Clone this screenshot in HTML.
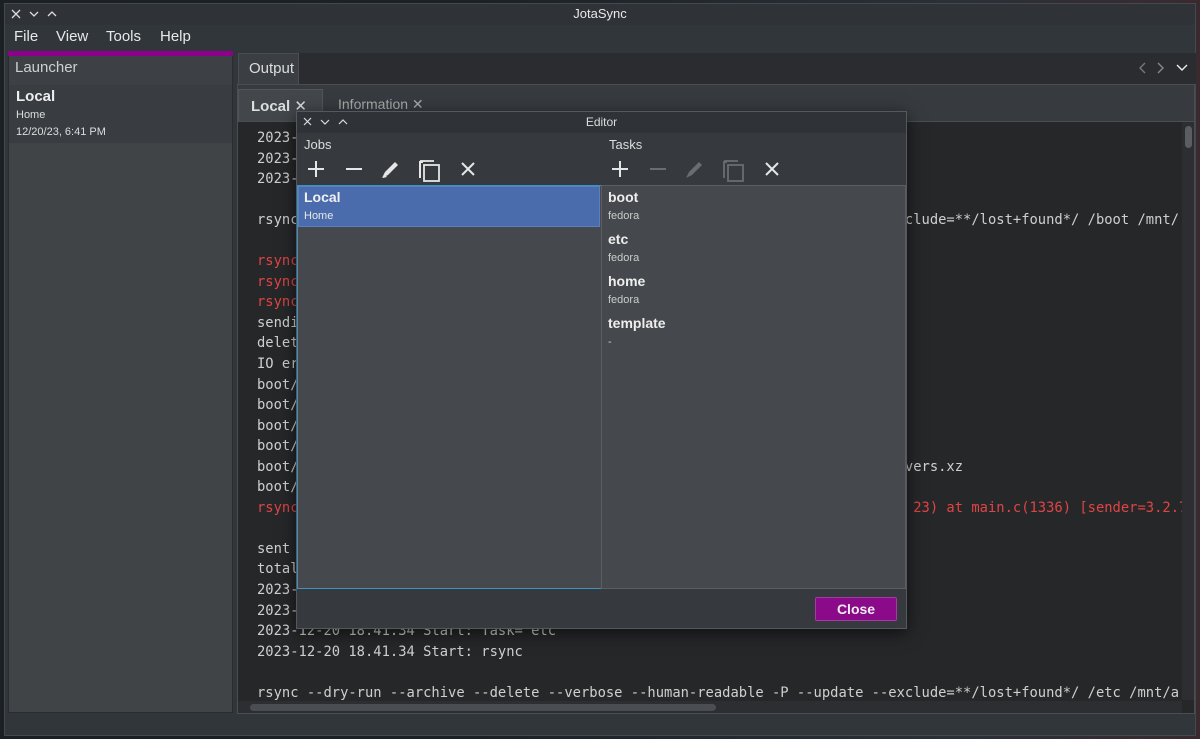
<!DOCTYPE html>
<html><head><meta charset="utf-8"><style>
*{margin:0;padding:0;box-sizing:border-box}
body{width:1200px;height:739px;background:#15191c;font-family:"Liberation Sans","DejaVu Sans",sans-serif;position:relative;overflow:hidden;color:#e0e0e0}
.a{position:absolute}
.mono{font-family:"DejaVu Sans Mono","Liberation Mono",monospace;font-size:13.8px;color:#cfcfcf;white-space:pre;line-height:20.55px}
.r{color:#e04444}
</style></head><body>
<div class="a" style="left:0;top:0;width:1200px;height:739px;background:linear-gradient(90deg,#1a2024,#1b2226 40%,#2a3038 80%,#3a2a30)"></div>
<div class="a" style="left:4px;top:3px;width:1192px;height:733px;background:#31363b;border:1px solid #45494d"></div>
<div class="a" style="left:5px;top:4px;width:1190px;height:21px;background:#2f3236"></div>
<div class="a" style="left:0;top:6px;width:1200px;text-align:center;font-size:13px;color:#e8e8e8">JotaSync</div>
<svg class="a" style="left:10px;top:8px" width="50" height="12" stroke="#ddd" stroke-width="1.3" fill="none"><path d="M2 2l8 8M10 2l-8 8"/><path d="M20 4l4 4 4-4"/><path d="M38 8l4-4 4 4"/></svg>
<div class="a" style="left:5px;top:25px;width:1190px;height:25px;background:#31363b"></div>
<div class="a" style="left:14px;top:28px;font-size:15px;color:#e8e8e8">File</div>
<div class="a" style="left:56px;top:28px;font-size:15px;color:#e8e8e8">View</div>
<div class="a" style="left:106px;top:28px;font-size:15px;color:#e8e8e8">Tools</div>
<div class="a" style="left:160px;top:28px;font-size:15px;color:#e8e8e8">Help</div>
<div class="a" style="left:8px;top:51px;width:225px;height:662px;background:#414447;border:1px solid #2a2d30"></div>
<div class="a" style="left:8px;top:51px;width:225px;height:5px;background:#8c008c"></div>
<div class="a" style="left:9px;top:56px;width:223px;height:29px;background:#3d4044"></div>
<div class="a" style="left:15px;top:59px;font-size:15px;color:#cfd0d0">Launcher</div>
<div class="a" style="left:9px;top:85px;width:223px;height:58px;background:#393c40"></div>
<div class="a" style="left:16px;top:88px;font-size:15px;font-weight:bold;color:#eee">Local</div>
<div class="a" style="left:16px;top:109px;font-size:11px;color:#ddd">Home</div>
<div class="a" style="left:16px;top:126px;font-size:11px;color:#ddd">12/20/23, 6:41 PM</div>
<div class="a" style="left:238px;top:53px;width:958px;height:31px;background:#2a2c2f"></div>
<div class="a" style="left:238px;top:53px;width:61px;height:31px;background:#3b3f43;border:1px solid #4a4e52;border-bottom:none"></div>
<div class="a" style="left:249px;top:60px;font-size:15px;color:#ddd">Output</div>
<svg class="a" style="left:1136px;top:61px" width="56" height="14" stroke-width="1.4" fill="none"><path d="M9 2l-5 5 5 5" stroke="#777"/><path d="M22 2l5 5-5 5" stroke="#888"/><path d="M41 4l5 5 5-5" stroke="#eee"/></svg>
<div class="a" style="left:237px;top:84px;width:958px;height:630px;background:#373b3f;border:1px solid #4a4e52"></div>
<div class="a" style="left:238px;top:89px;width:85px;height:33px;background:#43474b;border:1px solid #52565a"></div>
<div class="a" style="left:251px;top:97px;font-size:15px;font-weight:bold;color:#ddd">Local <span style="font-weight:normal">✕</span></div>
<div class="a" style="left:338px;top:96px;font-size:14px;color:#aaa">Information ✕</div>
<div class="a" style="left:238px;top:121px;width:956px;height:592px;background:#262729;border-top:1px solid #4a4e52;overflow:hidden">
<div class="mono a" style="left:19px;top:6px">2023-12-20 18.41.33 Start: Job= Local
2023-12-20 18.41.33 Start: Task= boot
2023-12-20 18.41.33 Start: rsync

rsync --dry-run --archive --delete --verbose --human-readable -P --update --exclude=**/lost+found*/ /boot /mnt/

<span class="r">rsync: [sender] opendir "/boot/efi" failed: Permission denied (13)</span>
<span class="r">rsync: [sender] opendir "/boot/grub2" failed: Permission denied (13)</span>
<span class="r">rsync: [sender] opendir "/boot/loader" failed: Permission denied (13)</span>
sending incremental file list
deleting boot/old
IO error encountered -- skipping file deletion
boot/
boot/config
boot/initramfs.img
boot/vmlinuz
boot/symvers.xz                                                            symvers.xz
boot/System.map
<span class="r">rsync error: some files/attrs were not transferred (see previous errors) (code 23) at main.c(1336) [sender=3.2.7]</span>

sent 1.23K bytes  received 123 bytes
total size is 123.45M  speedup is 99.99 (DRY RUN)
2023-12-20 18.41.34 End: rsync
2023-12-20 18.41.34 End: Task= boot
2023-12-20 18.41.34 Start: Task= etc
2023-12-20 18.41.34 Start: rsync

rsync --dry-run --archive --delete --verbose --human-readable -P --update --exclude=**/lost+found*/ /etc /mnt/a</div>
<div class="a" style="left:0;top:579px;width:944px;height:13px;background:#2c2e31"></div>
<div class="a" style="left:12px;top:582px;width:466px;height:7px;border-radius:4px;background:#4a4d51"></div>
</div>
<div class="a" style="left:1182px;top:122px;width:12px;height:578px;background:#2c2e31"></div>
<div class="a" style="left:1185px;top:126px;width:7px;height:22px;border-radius:4px;background:#5a5d61"></div>
<div class="a" style="left:296px;top:111px;width:611px;height:518px;background:#36393d;border:1px solid #55595d;box-shadow:0 4px 16px rgba(0,0,0,.6)"></div>
<div class="a" style="left:297px;top:112px;width:609px;height:21px;background:#2f3236"></div>
<div class="a" style="left:297px;top:115px;width:609px;text-align:center;font-size:12px;color:#ddd">Editor</div>
<svg class="a" style="left:302px;top:116px" width="50" height="12" stroke="#ddd" stroke-width="1.2" fill="none"><path d="M2 2l7 7M9 2l-7 7"/><path d="M19 4l4 4 4-4"/><path d="M37 8l4-4 4 4"/></svg>
<div class="a" style="left:304px;top:137px;font-size:13px;color:#ddd">Jobs</div>
<div class="a" style="left:609px;top:137px;font-size:13px;color:#ddd">Tasks</div>
<svg class="a" style="left:305px;top:158px" width="180" height="24" fill="none" stroke="#e6e6e6" stroke-width="2"><path d="M11 3v16M3 11h16"/><path d="M41 11h16"/><path d="M77 20l3-6 10-10 3 3-10 10z" fill="#e6e6e6" stroke="none"/><path d="M78 20l4-1-3-3z" fill="#e6e6e6" stroke="none"/><path d="M118 4h-3v16"/><rect x="119" y="7" width="15" height="16" stroke-width="1.8"/><path d="M115 3h14" stroke-width="1.8"/><path d="M157 5l12 12M169 5l-12 12"/></svg>
<svg class="a" style="left:609px;top:158px" width="180" height="24" fill="none" stroke-width="2"><path d="M11 3v16M3 11h16" stroke="#e6e6e6"/><path d="M41 11h16" stroke="#6a6d70"/><path d="M77 20l3-6 10-10 3 3-10 10z" fill="#6a6d70" stroke="none"/><g stroke="#6a6d70" stroke-width="1.8"><path d="M118 4h-3v16"/><rect x="119" y="7" width="15" height="16"/><path d="M115 3h14"/></g><path d="M157 5l12 12M169 5l-12 12" stroke="#e6e6e6"/></svg>
<div class="a" style="left:297px;top:185px;width:305px;height:404px;background:#45484c;border:1px solid #3a93c0"></div>
<div class="a" style="left:601px;top:185px;width:305px;height:404px;background:#45484c;border:1px solid #5a5e62"></div>
<div class="a" style="left:298px;top:186px;width:302px;height:41px;background:#4a6cad;border:1px solid #5a7fc2"></div>
<div class="a" style="left:304px;top:189px;font-size:14px;font-weight:bold;color:#f0f0f0">Local</div>
<div class="a" style="left:304px;top:210px;font-size:11px;color:#e8e8e8">Home</div>
<div class="a" style="left:608px;top:189px;font-size:14px;font-weight:bold;color:#eee">boot</div>
<div class="a" style="left:608px;top:210px;font-size:11px;color:#ccc">fedora</div>
<div class="a" style="left:608px;top:231px;font-size:14px;font-weight:bold;color:#eee">etc</div>
<div class="a" style="left:608px;top:252px;font-size:11px;color:#ccc">fedora</div>
<div class="a" style="left:608px;top:273px;font-size:14px;font-weight:bold;color:#eee">home</div>
<div class="a" style="left:608px;top:294px;font-size:11px;color:#ccc">fedora</div>
<div class="a" style="left:608px;top:315px;font-size:14px;font-weight:bold;color:#eee">template</div>
<div class="a" style="left:608px;top:336px;font-size:11px;color:#ccc">-</div>
<div class="a" style="left:815px;top:597px;width:82px;height:24px;background:#8a0a8a;border:1px solid #a53aa5;border-radius:2px;text-align:center;line-height:22px;font-size:14px;font-weight:bold;color:#eee">Close</div>
</body></html>
